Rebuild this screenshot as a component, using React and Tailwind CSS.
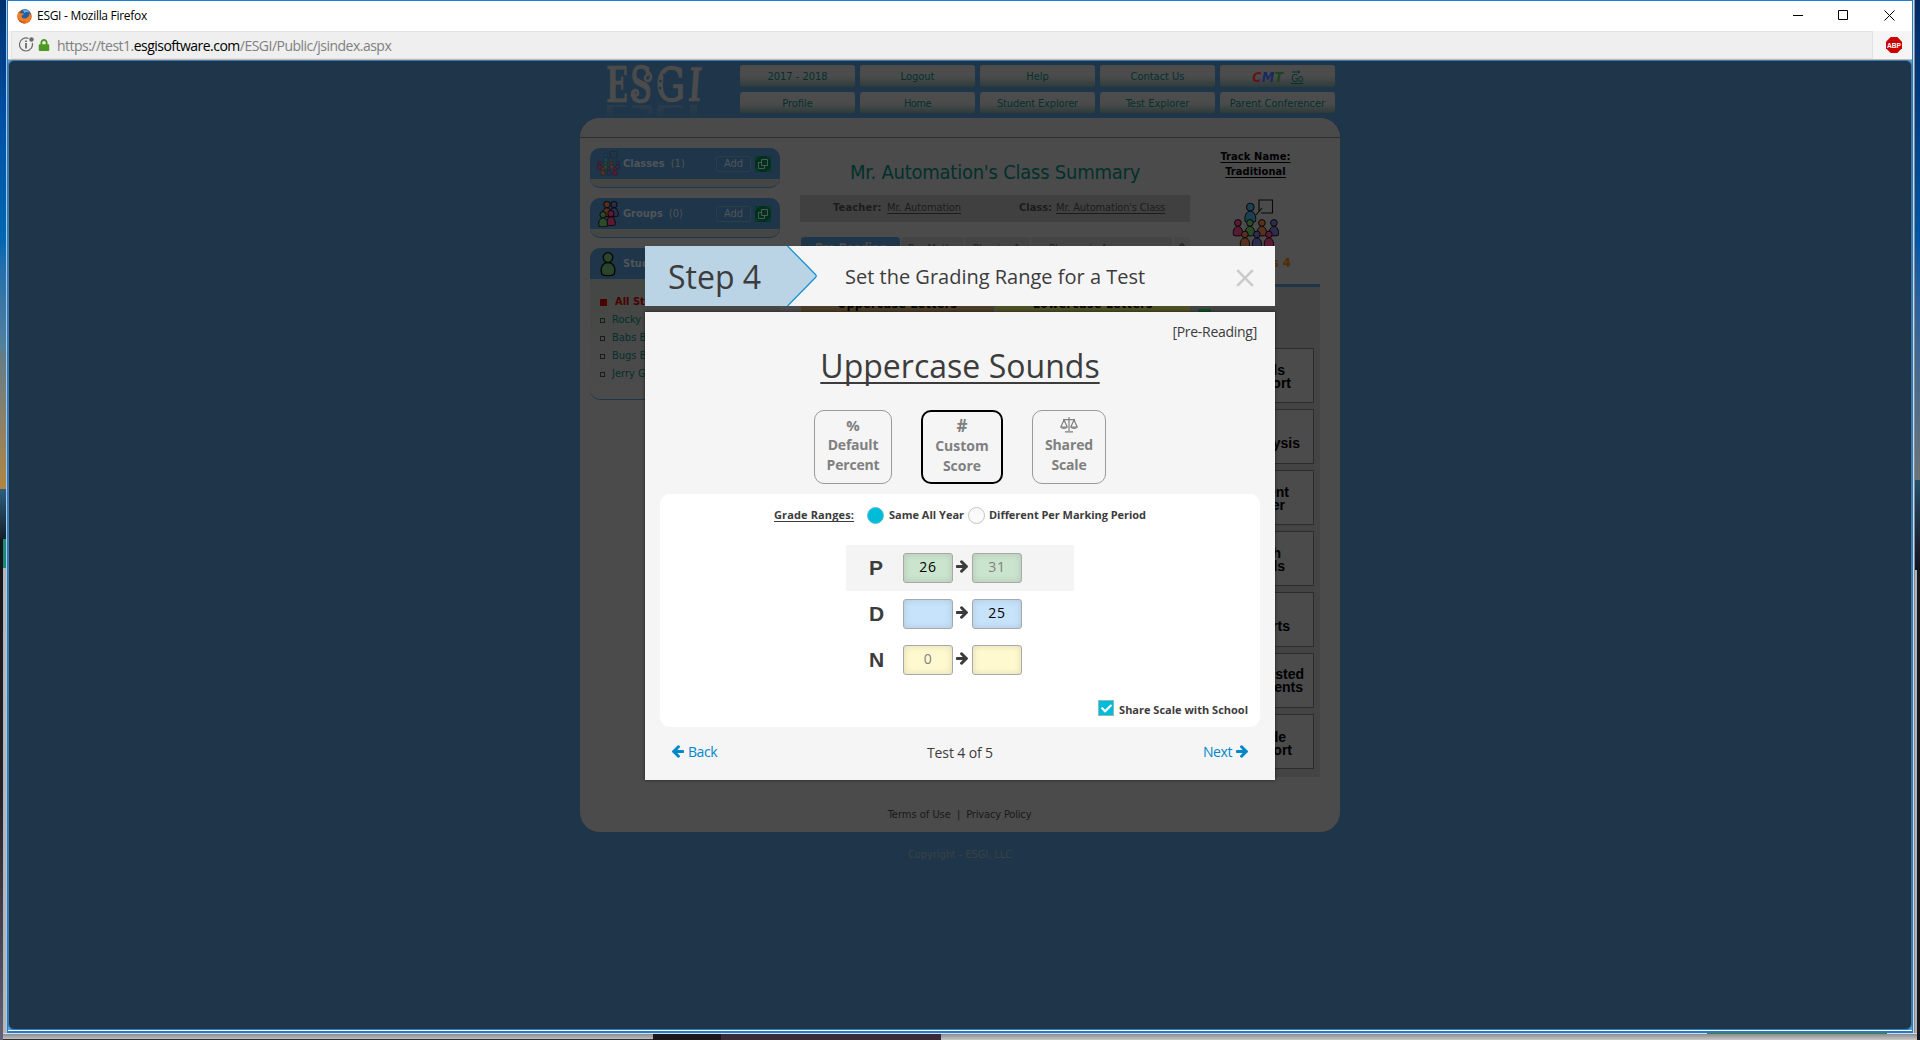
import React from "react";
import { FaCheck, FaLock } from "react-icons/fa";

const TAHOMA = "font-['DejaVu_Sans_Condensed','DejaVu_Sans',sans-serif]";
const SEGOE = "font-['Open_Sans','Noto_Sans',sans-serif]";

const PALETTE = {
  blue: "#1d3f52",
  pink: "#5a1a33",
  green: "#2a4a2a",
  orange: "#58301f",
  violet: "#2c2c4e",
};

function Arrow({ className }) {
  return (
    <svg className={className} viewBox="0 -75 1472 1558" fill="currentColor">
      <path d="M1472 704q0 54-37 91l-651 651q-39 37-91 37-51 0-90-37l-75-75q-38-38-38-91t38-91l293-293H117q-52 0-84.500-37.500T0 768V640q0-53 32.500-90.500T117 512h704L528 218q-38-36-38-90t38-90l75-75q38-38 90-38 53 0 91 38l651 651q37 35 37 90z" />
    </svg>
  );
}

function Person({ x, y, s = 1, color, stroke = "#0a0a0a" }) {
  return (
    <g transform={`translate(${x} ${y}) scale(${s})`} fill={PALETTE[color]} stroke={stroke} strokeWidth={1 / s}>
      <path d="M1 16.5c-1-5 1.2-9 4.5-9s5.500 4 4.500 9c-1.500 1-7.500 1-9 0z" />
      <circle cx="5.500" cy="4" r="3.400" />
    </g>
  );
}

function ClassIcon({ className, faint }) {
  const stroke = faint ? "#17222b" : "#080808";
  const p = { s: 0.98, stroke };
  return (
    <svg className={className} viewBox="0 0 48 52">
      <path d="M27 12V1h13.500v13H29M24 16l6-7" fill="none" stroke={stroke} strokeWidth="1.100" />
      <Person x={12} y={3.500} {...p} s={1.150} color="blue" />
      <Person x={0.500} y={20} {...p} color="pink" />
      <Person x={12.500} y={20} {...p} color="green" />
      <Person x={24.500} y={20} {...p} color="orange" />
      <Person x={36.500} y={20} {...p} color="violet" />
      <Person x={7.500} y={31.500} {...p} color="orange" />
      <Person x={19.500} y={31.500} {...p} color="violet" />
      <Person x={31.500} y={31.500} {...p} color="pink" />
    </svg>
  );
}

function GroupIcon() {
  return (
    <svg className="h-[26px] w-[22px]" viewBox="0 0 22 26">
      <Person x={4} y={0} color="orange" s={0.900} />
      <Person x={11} y={0} color="violet" s={0.900} />
      <Person x={8} y={9} color="pink" s={0.900} />
      <Person x={0} y={10} color="green" s={0.920} />
    </svg>
  );
}

function StudentIcon() {
  return (
    <svg className="h-[26px] w-[20px]" viewBox="0 0 20 26">
      <path d="M3 23.500C.5 17 4 11.500 9 11.500S17.500 17 15 23.500c-2 1.500-10 1.500-12 0z" fill="#2a452c" stroke="#050505" strokeWidth="1.300" />
      <circle cx="9" cy="6.500" r="4.800" fill="#2a452c" stroke="#050505" strokeWidth="1.300" />
    </svg>
  );
}

function LogoWord() {
  return (
    <g fontFamily="'DejaVu Serif','Liberation Serif',serif" fill="#4b4b4b" stroke="#4b4b4b">
      <text x="1" y="38" fontSize="48" fontWeight="700" strokeWidth="0.500" textLength="22" lengthAdjust="spacingAndGlyphs">E</text>
      <text x="25" y="38" fontSize="48" strokeWidth="1.500" textLength="22" lengthAdjust="spacingAndGlyphs">S</text>
      <text x="51" y="37" fontSize="46" strokeWidth="1.500" textLength="29" lengthAdjust="spacingAndGlyphs">G</text>
      <text x="85" y="37" fontSize="46" fontWeight="700" strokeWidth="0.500" textLength="13" lengthAdjust="spacingAndGlyphs" transform="skewX(-4)">I</text>
      <g fill="none" strokeWidth="2.500">
        <path d="M43 8c4 2 4 8 0 9c-4 0-4-6-.5-5.500" />
        <path d="M30 35c-4-2-4-8 0-9c4 0 4 6 .5 5.500" />
      </g>
      <g fill="#1f364a" stroke="none">
        <circle cx="55.500" cy="17" r="1.300" />
        <circle cx="59" cy="11" r="1.300" />
        <circle cx="55" cy="24" r="1.300" />
      </g>
    </g>
  );
}

function Logo() {
  return (
    <svg className="mt-[4px] ml-[25px] h-[54px] w-[101px] shrink-0" viewBox="0 0 101 54">
      <defs>
        <linearGradient id="fade" x1="0" x2="0" y1="0" y2="1">
          <stop offset="0" stopColor="#1f364a" stopOpacity="0" />
          <stop offset="1" stopColor="#1f364a" />
        </linearGradient>
      </defs>
      <LogoWord />
      <path d="M2 41h20v2h-14v11h-6zM27 41h18l3 6-4 7h-4l4-8-17-2zM54 41h24v3h-18l-3 10h-6l1-10zM85 41h7v13h-6z" fill="#4b4b4b" opacity="0.300" />
      <rect y="40" width="101" height="14" fill="url(#fade)" />
    </svg>
  );
}

function NavButton({ children, tall }) {
  return (
    <div
      className={`${tall ? "h-[22px]" : "h-[21px]"} flex w-[115px] items-center justify-center rounded-[3px] bg-linear-to-b from-[#4c4c4c] from-45% via-[#474a49] via-60% to-[#2d3b3a] pt-px text-[11px] leading-none text-[#04302e]`}
    >
      {children}
    </div>
  );
}

function Navigation() {
  return (
    <nav className="mt-[5px] ml-[34px] grid w-[600px] grid-cols-5 content-start gap-y-[5px]">
      <NavButton tall>2017 - 2018</NavButton>
      <NavButton tall>Logout</NavButton>
      <NavButton tall>Help</NavButton>
      <NavButton tall>Contact Us</NavButton>
      <NavButton tall>
        <span className="flex items-center gap-[8px]">
          <span className="text-[14px] leading-none font-bold italic tracking-[0.2px]">
            <span className="text-[#651318]">C</span>
            <span className="text-[#182a60]">M</span>
            <span className="text-[#1c4420]">T</span>
          </span>
          <span className="flex flex-col items-center">
            <svg className="h-[4px] w-[9px]" viewBox="0 0 9 4">
              <path d="M0 2h8M6 .5l2 1.500-2 1.500" fill="none" stroke="#04302e" />
            </svg>
            <span className="border-b border-[#04302e] text-[10px] leading-[9px] tracking-[-0.5px]">Go</span>
          </span>
        </span>
      </NavButton>
      <NavButton>Profile</NavButton>
      <NavButton><span className="tracking-[-0.5px]">Home</span></NavButton>
      <NavButton><span className="tracking-[-0.140px]">Student Explorer</span></NavButton>
      <NavButton>Test Explorer</NavButton>
      <NavButton>Parent Conferencer</NavButton>
    </nav>
  );
}

function PopOut() {
  return (
    <svg className="h-[16px] w-[16px]" viewBox="0 0 16 16">
      <rect width="16" height="16" rx="1" fill="#02301f" />
      <path d="M1 4V1h3M12 1h3v3M1 12v3h3M15 12v3h-3" fill="none" stroke="#0f4434" />
      <path d="M6.500 9.500h6v-6h-6zM6.500 6.500h-3v6h6v-3" fill="none" stroke="#4b5a55" />
    </svg>
  );
}

function SideCard({ icon, title, count, actions, bodyClass, children }) {
  return (
    <section className={`overflow-hidden rounded-[10px] border-b border-[#1f364a] ${bodyClass}`}>
      <header className="flex h-[31px] items-center bg-[#1f364a] pl-1 text-[11px] text-[#4f5459]">
        <span className="flex w-[29px] justify-center">{icon}</span>
        <b className="pt-[2px]">{title}</b>
        <span className="ml-[6px] pt-[2px]">{count}</span>
        {actions && (
          <span className="mr-[9px] ml-auto flex items-center gap-1">
            <span className="flex h-[16px] w-[35px] items-center justify-center rounded-[2px] border border-[#2b3f49] pt-px">Add</span>
            <PopOut />
          </span>
        )}
      </header>
      {children}
    </section>
  );
}

const students = ["Rocky", "Babs B", "Bugs B", "Jerry G"];

function Sidebar() {
  return (
    <aside className="mt-[10px] flex w-[190px] flex-col gap-[10px]">
      <SideCard title="Classes" count="(1)" actions icon={<ClassIcon faint className="h-[26px] w-[25px]" />} bodyClass="h-[40px] bg-[#454745]" />
      <SideCard title="Groups" count="(0)" actions icon={<GroupIcon />} bodyClass="h-[40px] bg-[#454745]" />
      <SideCard title="Stud" icon={<StudentIcon />} bodyClass="h-[152px] bg-linear-to-b from-[#424542] to-[#4b4b4b]">
        <ul className="pt-[14px] pl-[10px] text-[11px] leading-[18px] text-[#042f2c]">
          <li className="flex items-center gap-2 font-bold text-[#4b0000]">
            <span className="h-[7px] w-[7px] bg-[#4b0000]" />
            All Stu
          </li>
          {students.map((name) => (
            <li key={name} className="flex items-center gap-[7px]">
              <span className="h-[5px] w-[5px] border border-[#1c1c1c]" />
              {name}
            </li>
          ))}
        </ul>
      </SideCard>
    </aside>
  );
}

function Summary() {
  return (
    <main className="ml-5 w-[390px] pt-[20px]">
      <h1 className="text-center text-[20px] leading-[28px] tracking-[-0.240px] whitespace-nowrap text-[#02302c]">
        Mr. Automation's Class Summary
      </h1>
      <div className="mt-[9px] flex h-[27px] items-center bg-[#404040] pl-[33px] text-[11px] text-[#1c1c1c]">
        <b className="w-[54px] tracking-[0.200px]">Teacher:</b>
        <span className="w-[132px]"><u className="tracking-[-0.110px] underline-offset-2">Mr. Automation</u></span>
        <b className="w-[37px]">Class:</b>
        <u className="tracking-[-0.160px] underline-offset-2">Mr. Automation's Class</u>
      </div>
      <div className="mt-[15px] flex h-[70px] gap-px pl-px text-[11px] leading-[23px] text-[#222222]">
        <span className="w-[99px] rounded-t-[3px] bg-[#1f364a] pl-[14px] text-[12px] font-bold tracking-[-0.3px] text-[#4b4b4b]">Pre-Reading</span>
        <span className="w-[63px] rounded-t-[3px] bg-[#444444] pl-[7px]">Pre-Math</span>
        <span className="w-[65px] rounded-t-[3px] bg-[#444444] pl-[8px]">Phonics 1</span>
        <span className="w-[141px] rounded-t-[3px] bg-[#444444] pl-[18px]">Phonemic A</span>
        <svg className="ml-px h-[16px] w-[16px] bg-[#474747]" viewBox="0 0 16 16">
          <path d="M4 11l4-4 4 4" fill="none" stroke="#2a2a2a" strokeWidth="2" />
        </svg>
      </div>
      <div className="mt-[-11px] flex gap-[2px] pl-px text-center text-[12px] leading-[17px] font-bold text-black">
        <span className="h-[24px] w-[193px] bg-[#4b3d28] tracking-[0.490px]">Uppercase Letters</span>
        <span className="h-[24px] w-[194px] bg-[#4d4f25] tracking-[0.490px]">Lowercase Letters</span>
      </div>
    </main>
  );
}

const reports = [
  { lines: ["als", "port"], end: "mr-[28px]", pad: "pt-[15px]", second: "mr-[-6px]" },
  { lines: ["alysis"], end: "mr-[13px]", pad: "pt-[27px]" },
  { lines: ["ent", "er"], end: "mr-[24px]", pad: "pt-[15px]", second: "mr-[4px]" },
  { lines: ["h", "ds"], end: "mr-[28px]", pad: "pt-[15px]", first: "mr-[4px]" },
  { lines: ["rts"], end: "mr-[23px]", pad: "pt-[27px]" },
  { lines: ["ested", "dents"], end: "mr-[9px]", pad: "pt-[14px]", second: "mr-px" },
  { lines: ["de", "port"], end: "mr-[21px]", pad: "pt-[16px]", first: "mr-[6px]" },
];

function Reports() {
  return (
    <aside className="ml-auto w-[130px] pt-[11px]">
      <div className="pl-px text-center text-[11px] leading-[15px] font-bold tracking-[0.100px] text-black underline underline-offset-2">
        <div>Track Name:</div>
        <div>Traditional</div>
      </div>
      <ClassIcon className="mt-[20px] ml-[42px] h-[52px] w-[48px]" />
      <div className="mt-[2px] mr-[29px] text-right text-[13px] leading-[20px] font-bold text-[#522c02]">s 4</div>
      <div className="mt-[11px] h-[3px] bg-[#1f364a]" />
      <div className="flex h-[490px] flex-col gap-[6px] bg-[#444444] pt-[22px] pr-[6px]">
        <div className="mb-[23px] ml-[8px] h-[10px] w-[13px] shrink-0 bg-[#0d4d22]" />
        {reports.map((r, i) => (
          <div key={i} className={`h-[55px] shrink-0 border border-[#2c2c2c] bg-[#4b4b4b] text-right font-['Liberation_Sans',sans-serif] text-[14px] leading-[12.500px] font-bold text-black ${r.pad}`}>
            <div className={r.end}>
              <div className={r.first || ""}>{r.lines[0]}</div>
              {r.lines[1] && <div className={r.second || ""}>{r.lines[1]}</div>}
            </div>
          </div>
        ))}
      </div>
    </aside>
  );
}

function Page() {
  return (
    <div className={`mx-auto mt-[-1px] flex w-[760px] flex-col ${TAHOMA}`}>
      <div className="flex h-[58px]">
        <Logo />
        <Navigation />
      </div>
      <div className="h-[714px] overflow-hidden rounded-[20px] bg-[#4b4b4b]">
        <div className="h-[20px] border-b border-[#2e2e2e] bg-[#4a4a4a]" />
        <div className="flex h-[666px] pr-[20px] pl-[10px]">
          <Sidebar />
          <Summary />
          <Reports />
        </div>
        <div className="mt-[2px] flex justify-center gap-[6px] pr-px text-[11px] leading-[18px] text-[#191919]">
          <span>Terms of Use</span>
          <span>|</span>
          <span className="tracking-[-0.160px]">Privacy Policy</span>
        </div>
      </div>
      <div className="mt-[14px] text-center text-[11px] leading-[18px] tracking-[-0.070px] text-[#3a4144]">Copyright - ESGI, LLC</div>
    </div>
  );
}

function ModeButton({ symbol, lines, className }) {
  return (
    <button className={`flex h-[74px] flex-col items-center rounded-[10px] pt-[4px] text-[14px] leading-[20px] font-bold text-[#808080] ${className}`}>
      <span className="flex h-[20px] items-center">{symbol}</span>
      <span>{lines[0]}</span>
      <span>{lines[1]}</span>
    </button>
  );
}

function ScaleIcon() {
  return (
    <svg className="h-[16px] w-[18px]" viewBox="0 0 18 16" fill="none" stroke="#808080" strokeWidth="1.200">
      <path d="M9 0v14M5 14.800h8M3 2.600h12M4 3L.8 10h6.400zM14 3l-3.200 7h6.400z" />
      <path d="M.5 10.200c.8 2.300 6.200 2.300 7 0zM10.500 10.200c.8 2.300 6.200 2.300 7 0z" fill="#808080" stroke="none" />
    </svg>
  );
}

const tints = {
  green: "bg-[#cbe4ce]",
  blue: "bg-[#c7e3fb]",
  yellow: "bg-[#fff9d0]",
};

function ScoreBox({ value, tint, muted }) {
  return (
    <span
      className={`flex h-[30px] w-[50px] items-center justify-center rounded-[3px] border border-[#a9a9a9] pb-[3px] text-[14px] tracking-[0.700px] shadow-[inset_0_0_7px_rgba(0,0,0,0.13)] ${tints[tint]} ${muted ? "text-[#808080]" : "text-black"}`}
    >
      {value}
    </span>
  );
}

const grades = [
  { letter: "P", tint: "green", from: "26", to: "31", toMuted: true, row: "bg-[#f4f4f4]" },
  { letter: "D", tint: "blue", from: "", to: "25" },
  { letter: "N", tint: "yellow", from: "0", to: "", fromMuted: true },
];

function GradeRow({ g }) {
  return (
    <div className={`flex h-[46px] w-[228px] items-center pl-[23px] ${g.row || ""}`}>
      <span className="w-[34px] pb-px font-['Liberation_Sans',sans-serif] text-[21px] font-bold text-[#3c3c3c]">{g.letter}</span>
      <ScoreBox value={g.from} tint={g.tint} muted={g.fromMuted} />
      <Arrow className="mr-[4px] mb-[3px] ml-[3px] h-[13px] w-[12px] text-[#3c3c3c]" />
      <ScoreBox value={g.to} tint={g.tint} muted={g.toMuted} />
    </div>
  );
}

function Dialog() {
  return (
    <div className={`absolute top-[246px] left-[645px] w-[630px] text-[#3c3c3c] ${SEGOE}`}>
      <div className="flex h-[60px] bg-[#f5f5f5]">
        <div className="relative h-[60px] w-[172px]">
          <svg className="absolute inset-0 h-[60px] w-[172px]" viewBox="0 0 172 60">
            <path d="M0 0h142.500l28 28.500q1.500 1.500 0 3L142.500 60H0z" fill="#bad3e5" />
            <path d="M142.500 0l28 28.500q1.500 1.500 0 3L142.500 60" fill="none" stroke="#0d8fd0" strokeWidth="1.200" />
          </svg>
          <h2 className="relative pl-[23px] text-[32px] leading-[62px]">Step 4</h2>
        </div>
        <h3 className="ml-[28px] text-[20px] leading-[61px]">Set the Grading Range for a Test</h3>
        <svg className="mt-[23px] mr-[21px] ml-auto h-[18px] w-[18px]" viewBox="0 0 18 18">
          <path d="M1.200 1.200l15.600 15.600M16.800 1.200L1.200 16.800" stroke="#cbcbcb" strokeWidth="2.600" />
        </svg>
      </div>
      <div className="mt-[6px] flex h-[468px] flex-col bg-[#f5f5f5] px-[15px] shadow-[0_0_3px_rgba(0,0,0,0.6)]">
        <div className="mt-[9px] mr-[3px] self-end text-[14px] leading-[22px] tracking-[-0.280px]">[Pre-Reading]</div>
        <h1 className="mt-px self-center text-[32px] leading-[44px] tracking-[0.020px] underline decoration-2 underline-offset-[4px] [text-decoration-skip-ink:none]">
          Uppercase Sounds
        </h1>
        <div className="mt-[22px] flex pl-[154px]">
          <ModeButton className="w-[78px] border border-[#9a9a9a] tracking-[-0.200px]" symbol={<span className="text-[15px]">%</span>} lines={["Default", "Percent"]} />
          <ModeButton className="ml-[29px] w-[82px] border-2 border-black" symbol={<span className="text-[17px]">#</span>} lines={["Custom", "Score"]} />
          <ModeButton className="ml-[29px] w-[74px] border border-[#9a9a9a] tracking-[-0.140px]" symbol={<ScaleIcon />} lines={["Shared", "Scale"]} />
        </div>
        <div className="mt-[10px] flex h-[233px] flex-col rounded-[10px] bg-white pl-[114px] text-[11px] font-bold">
          <div className="mt-[13px] flex h-[17px] items-center">
            <u className="w-[93px] tracking-[0.130px] underline-offset-2">Grade Ranges:</u>
            <span className="h-[17px] w-[17px] rounded-full border border-[#5fc3d2] bg-[#00bcd9]" />
            <span className="ml-[5px] w-[79px]">Same All Year</span>
            <span className="h-[17px] w-[17px] rounded-full border border-[#c4c4c4] bg-[#fafafa]" />
            <span className="ml-[4px] tracking-[-0.040px]">Different Per Marking Period</span>
          </div>
          <div className="mt-[21px] ml-[72px] font-normal">
            {grades.map((g) => <GradeRow key={g.letter} g={g} />)}
          </div>
          <div className="mt-[17px] mr-[12px] flex items-center gap-[5px] self-end">
            <span className="mb-[4px] flex h-[16px] w-[16px] items-center justify-center border border-[#8fb9c0] bg-[#00bcd9]">
              <FaCheck className="h-[11px] w-[11px] text-white" />
            </span>
            <span className="pt-px">Share Scale with School</span>
          </div>
        </div>
        <div className="mt-[12px] grid grid-cols-3 text-[14px] leading-[22px]">
          <span className="flex items-center gap-[4px] pl-[12px] tracking-[-0.450px] text-[#0088cc]">
            <Arrow className="h-[13px] w-[12px] -scale-x-100" />
            Back
          </span>
          <span className="pt-[3px] text-center tracking-[-0.120px]">Test 4 of 5</span>
          <span className="flex items-center justify-end gap-[4px] pr-[12px] tracking-[-0.430px] text-[#0088cc]">
            Next
            <Arrow className="h-[13px] w-[12px]" />
          </span>
        </div>
      </div>
    </div>
  );
}

function FirefoxIcon() {
  return (
    <svg className="h-[15px] w-[15px]" viewBox="0 0 15 15">
      <circle cx="7.500" cy="7.500" r="7.200" fill="#d9531a" />
      <circle cx="8" cy="5.800" r="5.600" fill="#235fa6" />
      <path d="M6 1.500c2-1 5-.5 6.500 2-2-1-4-.5-5 .5z" fill="#5fb8e0" />
      <path d="M1 3c1 .2 2 .8 2.500 1.500 1.500-.5 3 .2 3.500 1-1.500.3-2.500 1-2.500 2 .5 2 3 2.500 4.500 1.800 2-.8 3.500-2.500 3.200-5.300 1.600 2 2.200 4 1.400 6.300C12 14 9 14.800 6.500 14.200 1.500 13 0 8 1 3z" fill="#ee7f22" />
      <path d="M1 9c1.500 3.500 5 4.500 8 3.300-2 2.200-7 1.700-8-3.300z" fill="#c23a1a" />
    </svg>
  );
}

function Browser() {
  return (
    <div className="absolute top-0 left-[7px] h-[1033px] w-[1906px] border border-b-2 border-[#1a7fd4] bg-white">
      <div className={`flex h-[30px] items-center pl-[9px] text-[12px] text-black ${SEGOE}`}>
        <FirefoxIcon />
        <span className="ml-[5px] tracking-[-0.290px]">ESGI - Mozilla Firefox</span>
        <svg className="mr-[17px] ml-auto h-[12px] w-[102px]" viewBox="0 0 102 12" fill="none" stroke="#000">
          <path d="M0 5.500h10" />
          <path d="M45.500 .5h9v9h-9z" />
          <path d="M91.500 .5l10 10M101.500 .5l-10 10" />
        </svg>
      </div>
      <div className="flex h-[28px] bg-[#f5f5f5] pl-[3px]">
        <div className={`flex w-[1862px] items-center border border-[#e2e2e2] bg-[#efefef] pl-[7px] text-[14px] tracking-[-0.520px] text-[#808080] ${SEGOE}`}>
          <svg className="mb-[2px] h-[15px] w-[16px]" viewBox="0 0 16 15" fill="none" stroke="#6a6a6a">
            <path d="M9.500 1.500A6.500 6.500 0 1 0 13.300 6" strokeWidth="1.200" />
            <path d="M7 6v5.500M7 3.500v1.500" strokeWidth="1.800" />
            <circle cx="12.500" cy="2.500" r="2.200" fill="#6a6a6a" stroke="none" />
          </svg>
          <FaLock className="mb-px ml-[3px] h-[12px] w-[12px] text-[#4c9a22]" />
          <span className="ml-[7px]">
            https://test1.<span className="text-black">esgisoftware.com</span>/ESGI/Public/jsindex.aspx
          </span>
        </div>
        <svg className="mt-[6px] ml-[13px] h-[16px] w-[16px]" viewBox="0 0 16 16">
          <path d="M4.700 0h6.600L16 4.700v6.600L11.300 16H4.700L0 11.300V4.700z" fill="#cc0000" />
          <text x="8" y="10.600" textAnchor="middle" fontSize="7" fontWeight="700" fontFamily="Liberation Sans, sans-serif" fill="#fff" textLength="14" lengthAdjust="spacingAndGlyphs">ABP</text>
        </svg>
      </div>
      <div className="h-[971px] border-t border-[#bcbcbc] bg-[#569cd6]">
        <div className="h-full overflow-hidden rounded-[6px] border border-[#3c79ab] bg-[#1f364a]">
          <Page />
        </div>
      </div>
    </div>
  );
}

function Desktop() {
  return (
    <div className="flex h-full justify-between">
      <div className="flex w-[7px]">
        <div className="flex w-[6px] flex-col">
          <div className="h-[240px] bg-linear-to-b from-[#003070] via-[#0050a5] to-[#0067b0]" />
          <div className="h-[110px] bg-linear-to-b from-[#0067b0] to-[#54809a]" />
          <div className="h-[139px] bg-linear-to-b from-[#5f7c88] via-[#8a8068] to-[#b0853f]" />
          <div className="h-[50px] bg-linear-to-b from-[#2d5f80] to-[#14202c]" />
          <div className="flex h-[501px] justify-end bg-linear-to-b from-[#14141c] via-[#20202c] to-[#606078]">
            <div className="w-[3px] bg-[#b5b5b5]">
              <div className="h-[29px] bg-[#1a8a72]" />
            </div>
          </div>
        </div>
        <div className="w-px bg-[#b8c4d0]" />
      </div>
      <div className="flex w-[7px]">
        <div className="w-px bg-[#d8d8d8]" />
        <div className="w-px bg-[#8a8a8a]" />
        <div className="flex w-[5px] flex-col">
          <div className="h-[480px] bg-linear-to-b from-[#002a66] via-[#0058a8] to-[#6a7478]" />
          <div className="h-[90px] bg-linear-to-b from-[#24506c] to-[#141420]" />
          <div className="flex grow bg-[#17171f]">
            <div className="w-[2px] bg-[#b0b0b0]" />
          </div>
        </div>
      </div>
    </div>
  );
}

function DesktopBottom() {
  return (
    <div className="absolute top-[1033px] left-[3px] flex h-[7px] w-[1914px] flex-col">
      <div className="flex h-px bg-[#dcdcdc]">
        <div className="ml-[1704px] w-[180px] bg-[#5a7a20]" />
      </div>
      <div className="flex h-[6px] bg-linear-to-b from-[#8c8c8c] to-[#c8c8c8]">
        <div className="w-[650px] border-b border-[#30303a]" />
        <div className="w-[68px] bg-[#1c151c]" />
        <div className="w-[220px] bg-[#3a2a38]" />
      </div>
    </div>
  );
}

export default function App() {
  return (
    <div className="relative h-[1040px] w-[1920px] overflow-hidden">
      <Desktop />
      <DesktopBottom />
      <Browser />
      <Dialog />
    </div>
  );
}
